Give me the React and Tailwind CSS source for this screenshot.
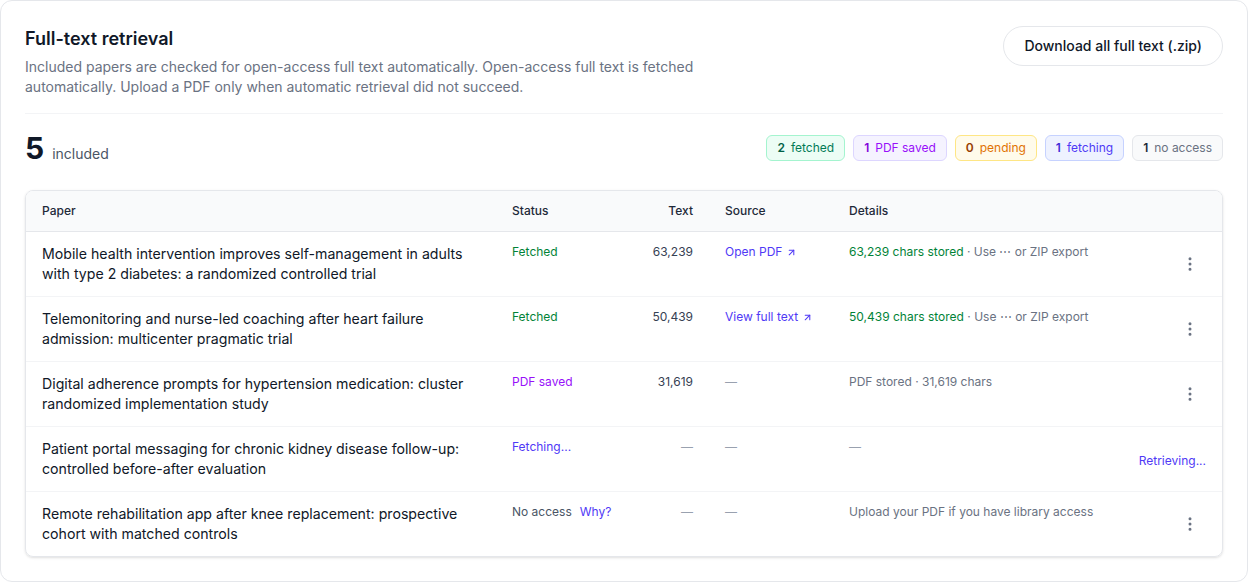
import { EllipsisVertical, ArrowUpRight } from 'lucide-react';

const badges = [
    { n: 2, label: 'fetched', box: 'bg-emerald-50 border-emerald-200 text-emerald-700', num: 'text-emerald-800' },
    { n: 1, label: 'PDF saved', box: 'bg-violet-50 border-violet-200 text-purple-600', num: 'text-purple-700' },
    { n: 0, label: 'pending', box: 'bg-amber-50 border-amber-200 text-amber-600', num: 'text-amber-800' },
    { n: 1, label: 'fetching', box: 'bg-indigo-50 border-indigo-200 text-indigo-600', num: 'text-indigo-700' },
    { n: 1, label: 'no access', box: 'bg-gray-50 border-gray-200 text-gray-500', num: 'text-gray-800' },
];

const papers = [
    {
        id: 1,
        title: 'Mobile health intervention improves self-management in adults with type 2 diabetes: a randomized controlled trial',
        status: 'fetched',
        text: '63,239',
        source: 'Open PDF',
        stored: '63,239 chars stored',
    },
    {
        id: 2,
        title: 'Telemonitoring and nurse-led coaching after heart failure admission: multicenter pragmatic trial',
        status: 'fetched',
        text: '50,439',
        source: 'View full text',
        stored: '50,439 chars stored',
    },
    {
        id: 3,
        title: 'Digital adherence prompts for hypertension medication: cluster randomized implementation study',
        status: 'pdf',
        text: '31,619',
        details: 'PDF stored · 31,619 chars',
    },
    {
        id: 4,
        title: 'Patient portal messaging for chronic kidney disease follow-up: controlled before-after evaluation',
        status: 'fetching',
    },
    {
        id: 5,
        title: 'Remote rehabilitation app after knee replacement: prospective cohort with matched controls',
        status: 'none',
        details: 'Upload your PDF if you have library access',
    },
];

function Dash() {
    return <span className="text-gray-400">—</span>;
}

function StatusCell({ status }) {
    if (status === 'fetched') return <span className="text-green-700">Fetched</span>;
    if (status === 'pdf') return <span className="text-purple-600">PDF saved</span>;
    if (status === 'fetching') return <span className="text-indigo-600">Fetching...</span>;
    return (
        <span className="flex gap-2 whitespace-nowrap">
            <span className="text-gray-600">No access</span>
            <span className="text-indigo-600">Why?</span>
        </span>
    );
}

export default function App() {
    return (
        <div className="bg-white" style={{ fontFamily: 'Inter, "Noto Sans", sans-serif' }}>
            <div className="border border-gray-200 rounded-xl p-6">
                {/* Header */}
                <div className="flex justify-between items-start">
                    <div>
                        <h1 className="text-lg leading-7 font-semibold text-gray-900">Full-text retrieval</h1>
                        <p className="mt-1 text-sm leading-5 text-gray-500 max-w-[700px]">
                            Included papers are checked for open-access full text automatically. Open-access full text is fetched automatically. Upload a PDF only when automatic retrieval did not succeed.
                        </p>
                    </div>
                    <button className="mt-px h-10 px-5 rounded-full border border-gray-200 bg-white text-sm font-medium text-gray-900">
                        Download all full text (.zip)
                    </button>
                </div>

                <div className="mt-4 border-t border-gray-100 pt-4 flex items-center justify-between">
                    <div className="flex items-baseline gap-2">
                        <span className="text-3xl font-bold text-gray-900">5</span>
                        <span className="text-sm text-gray-600">included</span>
                    </div>
                    <div className="flex gap-2">
                        {badges.map((b) => (
                            <span key={b.label} className={`h-[26px] px-2.5 flex items-center gap-1.5 rounded-md border text-xs ${b.box}`}>
                                <span className={`font-semibold ${b.num}`}>{b.n}</span>
                                {b.label}
                            </span>
                        ))}
                    </div>
                </div>

                {/* Table */}
                <div className="mt-6 border border-gray-200 rounded-lg shadow-sm overflow-hidden">
                    <table className="w-full table-fixed border-collapse text-left">
                        <colgroup>
                            <col className="w-[470px]" />
                            <col className="w-[113px]" />
                            <col className="w-[100px]" />
                            <col className="w-[124px]" />
                            <col className="w-[290px]" />
                            <col />
                        </colgroup>
                        <thead className="bg-gray-50">
                            <tr className="border-b border-gray-200 text-xs leading-4 font-medium text-gray-800">
                                <th className="px-4 py-3 font-medium">Paper</th>
                                <th className="px-4 py-3 font-medium">Status</th>
                                <th className="px-4 py-3 font-medium text-right">Text</th>
                                <th className="px-4 py-3 font-medium">Source</th>
                                <th className="px-4 py-3 font-medium">Details</th>
                                <th className="px-4 py-3"></th>
                            </tr>
                        </thead>
                        <tbody>
                            {papers.map((p, i) => (
                                <tr key={p.id} className={i < papers.length - 1 ? 'border-b border-gray-100' : ''}>
                                    <td className="px-4 py-3 align-top text-[14.15px] leading-5 text-gray-900">{p.title}</td>
                                    <td className="px-4 py-3 align-top text-xs leading-4">
                                        <StatusCell status={p.status} />
                                    </td>
                                    <td className="px-4 py-3 align-top text-xs leading-4 text-right text-gray-700">
                                        {p.text ? p.text : <Dash />}
                                    </td>
                                    <td className="px-4 py-3 align-top text-xs leading-4">
                                        {p.source ? (
                                            <span className="inline-flex items-center gap-1 text-indigo-600">
                                                {p.source}
                                                <ArrowUpRight size={11} strokeWidth={2.25} />
                                            </span>
                                        ) : (
                                            <Dash />
                                        )}
                                    </td>
                                    <td className="px-4 py-3 align-top text-xs leading-4 text-gray-500">
                                        {p.stored ? (
                                            <span>
                                                <span className="text-green-700">{p.stored}</span> · Use ⋯ or ZIP export
                                            </span>
                                        ) : p.details ? (
                                            p.details
                                        ) : (
                                            <Dash />
                                        )}
                                    </td>
                                    <td className="pl-2 pr-4 py-3 align-middle text-right">
                                        {p.status === 'fetching' ? (
                                            <span className="text-xs text-indigo-600">Retrieving...</span>
                                        ) : (
                                            <button className="inline-flex w-8 h-8 items-center justify-center text-gray-500">
                                                <EllipsisVertical size={18} />
                                            </button>
                                        )}
                                    </td>
                                </tr>
                            ))}
                        </tbody>
                    </table>
                </div>
            </div>
        </div>
    );
}
